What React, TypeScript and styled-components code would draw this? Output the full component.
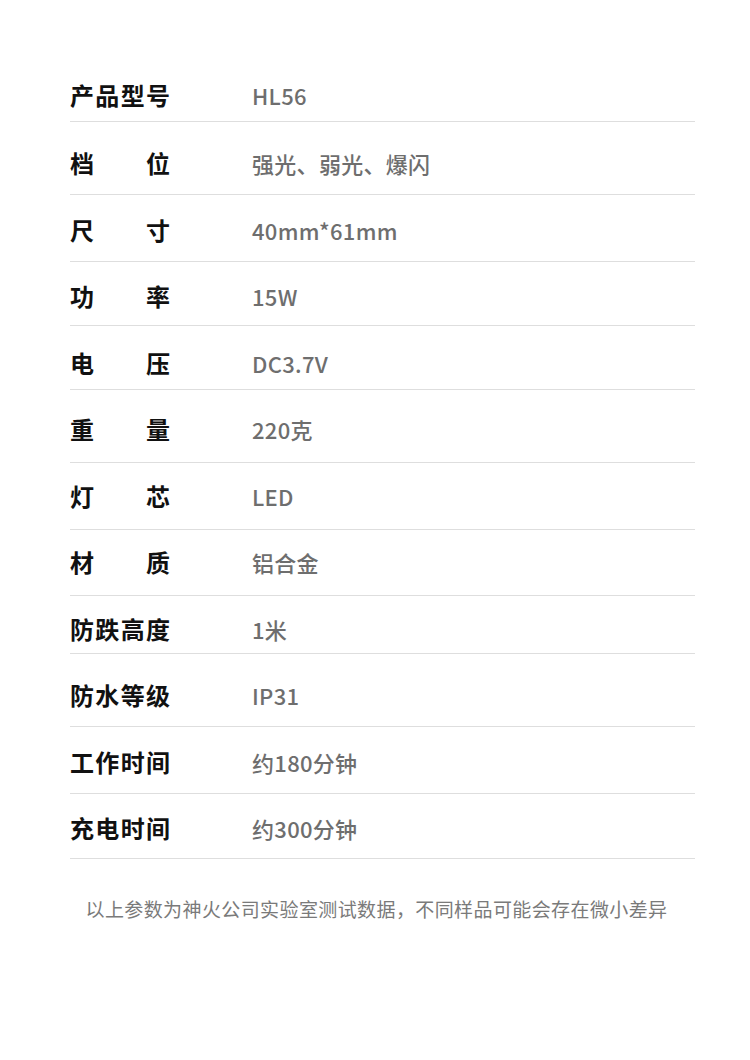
import React from "react";
import styled, { createGlobalStyle } from "styled-components";

const Global = createGlobalStyle`
  html, body { margin: 0; padding: 0; background: #ffffff; }
  body { font-family: "Noto Sans CJK SC", "Noto Sans", sans-serif; }
`;

const Page = styled.div`
  width: 750px;
  height: 1060px;
  box-sizing: border-box;
  padding: 83px 55px 0 70px;
  display: flex;
  flex-direction: column;
`;

const Table = styled.div`
  display: flex;
  flex-direction: column;
  width: 625px;
`;

const Row = styled.div<{ $top: number; $bottom: number }>`
  display: flex;
  align-items: center;
  padding-top: ${(p) => p.$top}px;
  padding-bottom: ${(p) => p.$bottom}px;
  border-bottom: 1px solid #dedede;
`;

const Label = styled.div`
  width: 100px;
  flex: none;
  font-size: 24px;
  line-height: 24px;
  height: 24px;
  font-weight: 700;
  color: #111111;
  text-align: justify;
  text-align-last: justify;
`;

const Value = styled.div`
  margin-left: 82px;
  font-size: 22px;
  line-height: 24px;
  height: 24px;
  font-weight: 500;
  color: #6e6e6e;
  letter-spacing: 0.3px;
`;

const Note = styled.div`
  margin-top: 39px;
  width: 613px;
  text-align: center;
  font-size: 19px;
  line-height: 22px;
  color: #7a7a7a;
  letter-spacing: 0.4px;
`;

const rows: [string, string, number, number][] = [
  ["产品型号", "HL56", 0, 14],
  ["档位", "强光、弱光、爆闪", 29, 19],
  ["尺寸", "40mm*61mm", 23, 19],
  ["功率", "15W", 22, 17],
  ["电压", "DC3.7V", 25, 14],
  ["重量", "220克", 27, 21],
  ["灯芯", "LED", 21, 21],
  ["材质", "铝合金", 20, 21],
  ["防跌高度", "1米", 21, 12],
  ["防水等级", "IP31", 29, 19],
  ["工作时间", "约180分钟", 23, 19],
  ["充电时间", "约300分钟", 22, 18],
];

export default function App() {
  return (
    <>
      <Global />
      <Page>
        <Table>
          {rows.map(([l, v, t, b]) => (
            <Row key={l} $top={t} $bottom={b}>
              <Label>{l}</Label>
              <Value>{v}</Value>
            </Row>
          ))}
        </Table>
        <Note>以上参数为神火公司实验室测试数据，不同样品可能会存在微小差异</Note>
      </Page>
    </>
  );
}
